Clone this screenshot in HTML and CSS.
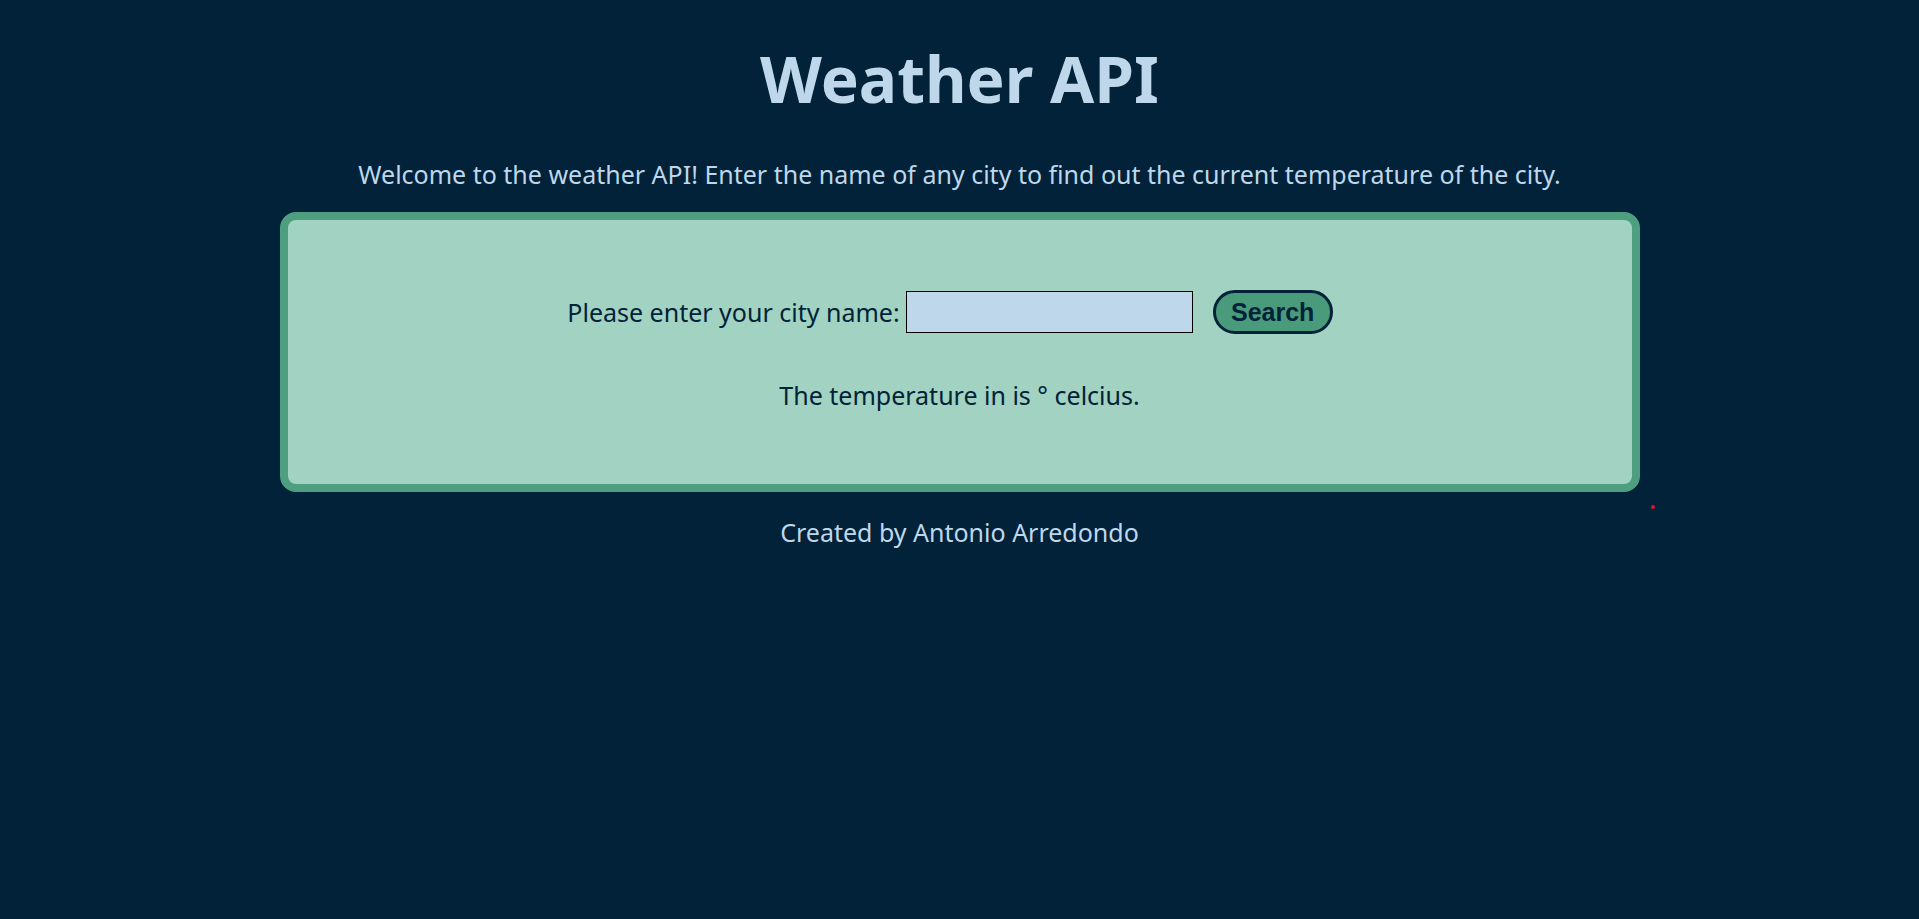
FILE: index.html
```html
<!DOCTYPE html>
<html lang="en">
<head>
<meta charset="utf-8">
<title>Weather API</title>
<link rel="stylesheet" href="styles.css">
</head>
<body>
<h1 class="title">Weather API</h1>
<p class="intro">Welcome to the weather API! Enter the name of any city to find out the current temperature of the city.</p>
<main class="card">
  <form class="search-row">
    <label class="city-label" for="city">Please enter your city name:</label>
    <input class="city-input" id="city" type="text">
    <button class="search-btn" type="button">Search</button>
  </form>
  <p class="result">The temperature in  is ° celcius.</p>
</main>
<footer class="credit">Created by Antonio Arredondo</footer>
<span class="dot"></span>
</body>
</html>
```
FILE: styles.css
```css
html, body {
  margin: 0;
  padding: 0;
}
body {
  background: #012238;
  color: #bfd7ea;
  font-family: "Noto Sans", "Open Sans", sans-serif;
  text-align: center;
  min-height: 919px;
  position: relative;
}
.title {
  margin: 0;
  padding-top: 35px;
  font-size: 64px;
  line-height: 87px;
  font-weight: 700;
}
.intro {
  margin: 35px 0 0;
  font-size: 25px;
  line-height: 34px;
}
.card {
  box-sizing: border-box;
  width: 1360px;
  height: 280px;
  margin: 21px auto 0;
  background: #a2d2c1;
  border: 8px solid #4e9e80;
  border-radius: 16px;
  color: #012238;
  padding-top: 70px;
}
.search-row {
  display: flex;
  justify-content: center;
  align-items: center;
  margin: 0;
  height: 44px;
}
.city-label {
  font-size: 25px;
  line-height: 34px;
  margin-right: 6px;
}
.city-input {
  box-sizing: border-box;
  width: 287px;
  height: 42px;
  padding: 0 4px;
  border: 1px solid #000;
  background: #bfd7ea;
  font-size: 20px;
  outline: none;
}
.search-btn {
  box-sizing: border-box;
  width: 120px;
  height: 44px;
  margin-left: 20px;
  margin-right: 19px;
  padding: 0;
  background: #4a9a7c;
  color: #012238;
  border: 3px solid #012238;
  border-radius: 22px;
  font-family: "Liberation Sans", Arial, sans-serif;
  font-weight: 700;
  font-size: 25px;
}
.result {
  margin: 44px 0 0;
  font-size: 25px;
  line-height: 34px;
}
.credit {
  margin-top: 23px;
  font-size: 25px;
  line-height: 34px;
}
.dot {
  position: absolute;
  left: 1651px;
  top: 505px;
  width: 4px;
  height: 4px;
  border-radius: 50%;
  background: #e0141e;
}
```
